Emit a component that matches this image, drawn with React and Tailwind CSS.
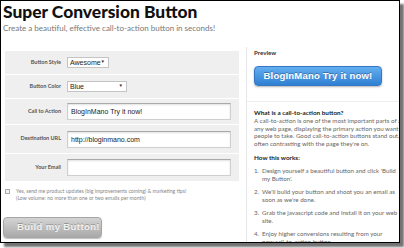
const rows = [
  { label: 'Button Style', h: 'h-[23px]', kind: 'select', value: 'Awesome', w: 'w-[42px]' },
  { label: 'Button Color', h: 'h-[23px]', kind: 'select', value: 'Blue', w: 'w-[60px]' },
  { label: 'Call to Action', h: 'h-[25px]', kind: 'input', value: 'BlogInMano Try it now!' },
  { label: 'Destination URL', h: 'h-[28px]', kind: 'input', value: 'http://bloginmano.com' },
  { label: 'Your Email', h: 'h-[27px]', kind: 'input', value: '' },
]

const steps = [
  ["Design yourself a beautiful button and click 'Build", "my Button'."],
  ["We'll build your button and shoot you an email as", "soon as we're done."],
  ['Grab the javascript code and install it on your web', 'site.'],
  ['Enjoy higher conversions resulting from your', 'new call-to-action button.'],
]

const FakeSelect = ({ value, w }) => (
  <div className={`${w} h-[11px] bg-white border border-[#c4c4c4] flex items-center justify-between pl-[2px] pr-[3px]`}>
    <span className="text-[7px] leading-none text-[#222] font-['Liberation_Sans',sans-serif]">{value}</span>
    <span className="text-[4.5px] leading-none text-[#333]">▼</span>
  </div>
)

const FakeInput = ({ value }) => (
  <div className="w-[164px] h-[17px] bg-white border border-[#cfcfcf] border-t-[#a9a9a9] shadow-[inset_0_1px_2px_rgba(0,0,0,0.12)] flex items-center pl-[3px]">
    <span className="text-[7px] leading-none text-[#222] font-['Liberation_Sans',sans-serif]">{value}</span>
  </div>
)

export default function App() {
  return (
    <div className="w-[404px] h-[248px] bg-white font-['Lato',sans-serif]">
      <div className="w-[400px] h-[243px] border border-black bg-white shadow-[4px_4px_2px_rgba(0,0,0,0.55)] overflow-hidden flex flex-col">
        <div className="h-[46px] pl-[2px] shrink-0">
          <h1 className="text-[17.4px] leading-[20px] font-black text-[#111] mt-[1px]">Super Conversion Button</h1>
          <p className="text-[8px] leading-[10px] text-[#777] mt-[1px]">Create a beautiful, effective call-to-action button in seconds!</p>
        </div>

        <div className="flex flex-1 min-h-0">
          <div className="w-[246px] shrink-0 border-r border-[#e6e6e6] pl-[4px] pt-[4px]">
            <div className="w-[234px] flex flex-col gap-[1px]">
              {rows.map(row => (
                <div key={row.label} className={`${row.h} bg-[#efefef] flex items-center`}>
                  <span className="w-[56px] text-right text-[5.5px] font-bold text-[#555] leading-none">{row.label}</span>
                  <div className="ml-[6px]">
                    {row.kind === 'select' ? <FakeSelect value={row.value} w={row.w} /> : <FakeInput value={row.value} />}
                  </div>
                </div>
              ))}
            </div>

            <div className="flex items-start mt-[7px]">
              <div className="w-[5px] h-[5px] border border-[#aaa] bg-[#f4f4f4] mt-[1px] shrink-0" />
              <div className="ml-[6px] text-[5.2px] leading-[7px] text-[#888]">
                <p>Yes, send me product updates (big improvements coming) &amp; marketing tips!</p>
                <p>(Low volume:  no more than one or two emails per month)</p>
              </div>
            </div>

            <button className="mt-[15px] -ml-[2px] w-[99px] h-[21px] rounded-[4px] border border-[#a5a5a5] bg-gradient-to-b from-[#d4d4d4] to-[#a9a9a9] shadow-[0_1px_1px_rgba(0,0,0,0.25)] text-left pl-[13px] whitespace-nowrap text-[9.5px] font-bold tracking-[0.4px] text-[#f2f2f2] [text-shadow:0_-1px_0_rgba(0,0,0,0.25)] font-['Liberation_Sans',sans-serif]">
              Build my Button!
            </button>
          </div>

          <div className="flex-1 pl-[7px] pt-[2px] text-[#666] overflow-hidden">
            <p className="text-[6.2px] leading-[8px] font-bold text-[#333]">Preview</p>
            <div className="mt-[9px] w-[128px] h-[20px] rounded-[4px] border border-[#3577c2] bg-gradient-to-b from-[#63aef0] to-[#2f80d3] shadow-[0_1px_2px_rgba(0,0,0,0.3)] flex items-center justify-center">
              <span className="text-[9.5px] font-bold tracking-[0.2px] text-white [text-shadow:0_-1px_0_rgba(0,0,0,0.3)] font-['Liberation_Sans',sans-serif]">BlogInMano Try it now!</span>
            </div>
            <div className="mt-[15px] -ml-[7px] border-t border-[#eeeeee] w-[160px]" />
            <p className="mt-[7px] text-[6.4px] leading-[8px] font-bold text-[#222] whitespace-nowrap">What is a call-to-action button?</p>
            <div className="text-[6.2px] leading-[7.5px] whitespace-nowrap">
              <p>A call-to-action is one of the most important parts of a</p>
              <p>any web page, displaying the primary action you want</p>
              <p>people to take. Good call-to-action buttons stand out,</p>
              <p>often contrasting with the page they're on.</p>
            </div>
            <p className="mt-[7px] text-[6.4px] leading-[8px] font-bold text-[#222]">How this works:</p>
            <ol className="mt-[5px] flex flex-col gap-[5px] text-[6.2px] leading-[8px] whitespace-nowrap">
              {steps.map((s, i) => (
                <li key={i} className="flex">
                  <span className="w-[8px] shrink-0">{i + 1}.</span>
                  <span>{s[0]}<br />{s[1]}</span>
                </li>
              ))}
            </ol>
          </div>
        </div>
      </div>
    </div>
  )
}
